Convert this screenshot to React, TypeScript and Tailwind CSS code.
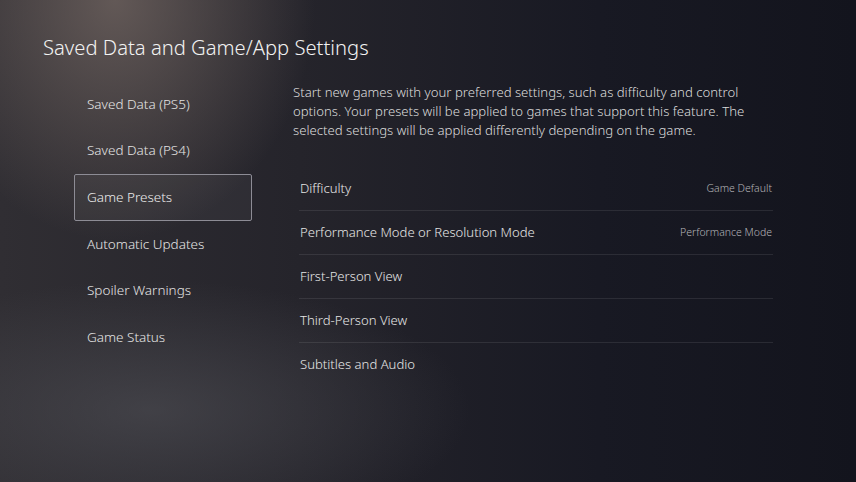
const MENU = [
  'Saved Data (PS5)',
  'Saved Data (PS4)',
  'Game Presets',
  'Automatic Updates',
  'Spoiler Warnings',
  'Game Status',
]

const ROWS: { label: string; value?: string }[] = [
  { label: 'Difficulty', value: 'Game Default' },
  { label: 'Performance Mode or Resolution Mode', value: 'Performance Mode' },
  { label: 'First-Person View' },
  { label: 'Third-Person View' },
  { label: 'Subtitles and Audio' },
]

export default function App() {
  return (
    <div
      className="relative w-[856px] h-[482px] overflow-hidden text-white font-light bg-[#14151f] bg-[radial-gradient(ellipse_200px_240px_at_115px_0px,rgba(112,100,96,0.8),transparent),radial-gradient(ellipse_320px_130px_at_150px_410px,rgba(80,80,86,0.6),transparent),linear-gradient(90deg,#302e33_0%,#25242b_35%,#181923_70%,#13141d_100%)]"
      style={{ fontFamily: '"Noto Sans", "Open Sans", sans-serif' }}
    >
      {/* Title */}
      <h1 className="pl-[43px] pt-[33px] text-[20.2px] font-light leading-[28px] text-[#f2f2f2]">
        Saved Data and Game/App Settings
      </h1>

      <div className="flex mt-[20px]">
        {/* Left menu */}
        <nav className="w-[178px] ml-[74px] flex flex-col">
          {MENU.map((item) => {
            const active = item === 'Game Presets'
            return (
              <div
                key={item}
                className={
                  active
                    ? 'h-[47px] flex items-center pl-[12px] border-[1.5px] border-[#8d8c95] rounded-[2px] bg-white/[0.04] text-[13.5px] text-[#ececec]'
                    : 'h-[46.4px] flex items-center pl-[13px] text-[13.5px] text-[#e4e4e4]'
                }
              >
                {item}
              </div>
            )
          })}
        </nav>

        {/* Right panel */}
        <section className="ml-[41px] w-[480px] mt-[2px]">
          <p className="pr-[10px] text-[13.15px] leading-[19px] text-[#dcdcdc]">
            Start new games with your preferred settings, such as difficulty and control options. Your presets will be
            applied to games that support this feature. The selected settings will be applied differently depending on
            the game.
          </p>

          <div className="mt-[27px] pl-[6px]">
            {ROWS.map((row, i) => (
              <div
                key={row.label}
                className={`h-[44px] flex items-center justify-between ${
                  i < ROWS.length - 1 ? 'border-b border-white/[0.09]' : ''
                }`}
              >
                <span className="pl-[1px] text-[13.1px] text-[#e6e6e6]">{row.label}</span>
                {row.value && <span className="pr-[1px] text-[10.5px] text-[#b4b4b8]">{row.value}</span>}
              </div>
            ))}
          </div>
        </section>
      </div>
    </div>
  )
}
